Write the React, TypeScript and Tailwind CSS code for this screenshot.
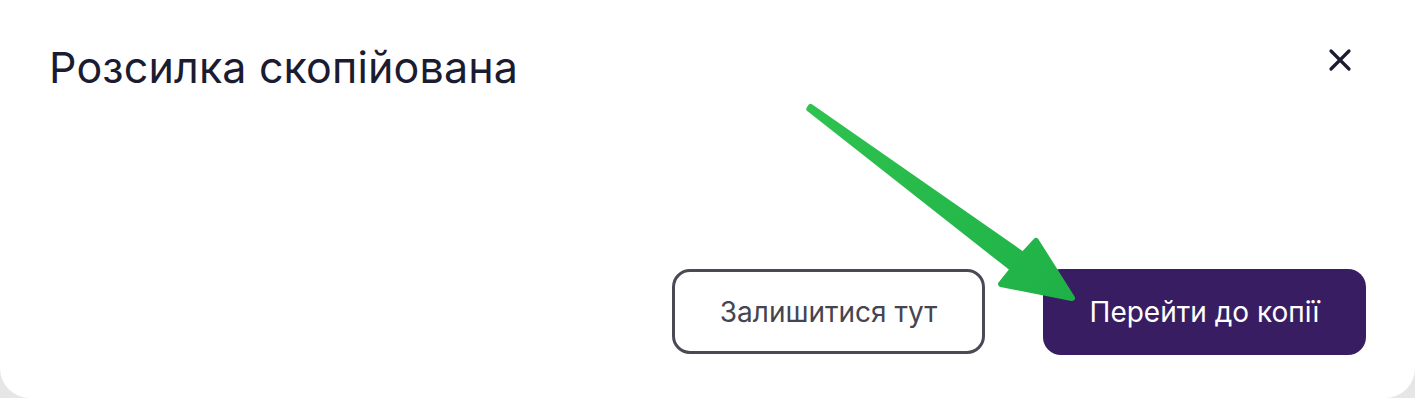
import React from "react";

export default function App() {
  return (
    <div className="w-[1415px] h-[398px] bg-[#e6e6e6] overflow-hidden" style={{ fontFamily: "Inter, 'Noto Sans', sans-serif" }}>
      <div className="relative w-full h-full bg-white rounded-b-[30px] flex flex-col">
        <div className="flex items-start justify-between pl-[49px] pr-[60px] pt-[41px]">
          <h1 className="text-[43px] leading-[52px] font-normal text-[#1b1c31] tracking-[0.15px]">Розсилка скопійована</h1>
          <button className="mt-[4px] w-[30px] h-[30px] flex items-center justify-center text-[#1b1c31]">
            <svg width="24" height="24" viewBox="0 0 24 24" fill="none" stroke="currentColor" strokeWidth="3.2" strokeLinecap="round">
              <path d="M3 3 L21 21 M21 3 L3 21" />
            </svg>
          </button>
        </div>
        <div className="flex justify-end gap-[58px] pr-[49px] mt-[176px]">
          <button className="w-[313px] h-[85px] rounded-[18px] border-[3px] border-[#4a4a56] bg-white text-[28px] text-[#45454f] flex items-center justify-center">
            Залишитися тут
          </button>
          <button className="w-[323px] h-[86px] rounded-[18px] bg-[#391d63] text-[28px] text-white flex items-center justify-center">
            Перейти до копії
          </button>
        </div>
        <svg className="absolute left-0 top-0 pointer-events-none" width="1415" height="398" viewBox="0 0 1415 398">
          <defs>
            <linearGradient id="g" x1="810" y1="108" x2="1072" y2="299" gradientUnits="userSpaceOnUse">
              <stop offset="0" stopColor="#2ec24f" />
              <stop offset="1" stopColor="#1fb147" />
            </linearGradient>
          </defs>
          <polygon
            points="810.6,107 1023,255 1036,241 1072,298 1001,284 1013,269 809.4,109"
            fill="url(#g)"
            stroke="url(#g)"
            strokeWidth="6"
            strokeLinejoin="round"
          />
        </svg>
      </div>
    </div>
  );
}
